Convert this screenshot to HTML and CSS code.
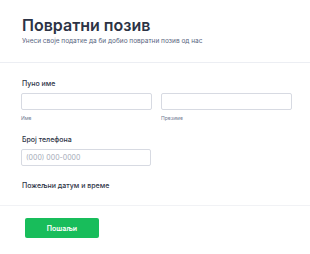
FILE: index.html
```html
<!DOCTYPE html>
<html lang="sr">
<head>
  <meta charset="UTF-8">
  <meta name="viewport" content="width=device-width, initial-scale=1.0">
  <title>Повратни позив</title>
  <link rel="stylesheet" href="styles.css">
</head>
<body>
  <div class="form-header">
    <h1>Повратни позив</h1>
    <p class="subtitle">Унеси своје податке да би добио повратни позив од нас</p>
  </div>

  <form class="form-body">
    <div class="field">
      <label class="field-label">Пуно име</label>
      <div class="name-row">
        <div class="name-col">
          <input type="text" id="first">
          <span class="sublabel">Име</span>
        </div>
        <div class="name-col">
          <input type="text" id="last">
          <span class="sublabel">Презиме</span>
        </div>
      </div>
    </div>

    <div class="field field-phone">
      <label class="field-label" for="phone">Број телефона</label>
      <input type="text" id="phone" class="phone" placeholder="(000) 000-0000">
    </div>

    <div class="field field-date">
      <label class="field-label">Пожељни датум и време</label>
    </div>
  </form>

  <div class="form-footer">
    <button type="submit">Пошаљи</button>
  </div>
</body>
</html>
```

FILE: styles.css
```css
html * {
  font-family: Inter, "Noto Sans", sans-serif;
  box-sizing: border-box;
}

body {
  margin: 0;
  background: #fff;
  color: #2c3345;
  overflow: hidden;
}

.form-header {
  padding: 15px 22px 0 22px;
  height: 63px;
  border-bottom: 1px solid #eceef3;
}

h1 {
  margin: 0;
  font-size: 16px;
  line-height: 20px;
  font-weight: 600;
  color: #2c3345;
}

.subtitle {
  margin: 1px 0 0 0;
  font-size: 6.5px;
  line-height: 10px;
  color: #57647e;
}

.form-body {
  padding: 16px 18px 0 21px;
}

.field {
  margin-bottom: 13px;
}

.field-phone {
  margin-bottom: 15px;
}

.field-date {
  margin-bottom: 14px;
}

.field-label {
  display: block;
  margin-left: 1px;
  font-size: 7px;
  line-height: 10px;
  font-weight: 500;
  color: #2c3345;
  margin-bottom: 4px;
}

.name-row {
  display: flex;
  gap: 9px;
}

.name-col {
  flex: 1;
  display: flex;
  flex-direction: column;
}

input {
  display: block;
  margin: 0;
  height: 17px;
  width: 100%;
  border: 1px solid #d7dae2;
  border-radius: 2px;
  padding: 0 4px;
  font-size: 7px;
  background: #fff;
}

input::placeholder {
  color: #a5abb8;
}

.phone {
  width: 130px;
}

.sublabel {
  margin-top: 5px;
  font-size: 5px;
  line-height: 7px;
  color: #6f7a92;
}

.form-footer {
  border-top: 1px solid #f1f2f5;
  padding: 12px 25px;
}

button {
  display: block;
  width: 74px;
  height: 20px;
  border: none;
  border-radius: 2px;
  background: #18bd5b;
  color: #fff;
  font-size: 7px;
  font-weight: 600;
  cursor: pointer;
}
```
